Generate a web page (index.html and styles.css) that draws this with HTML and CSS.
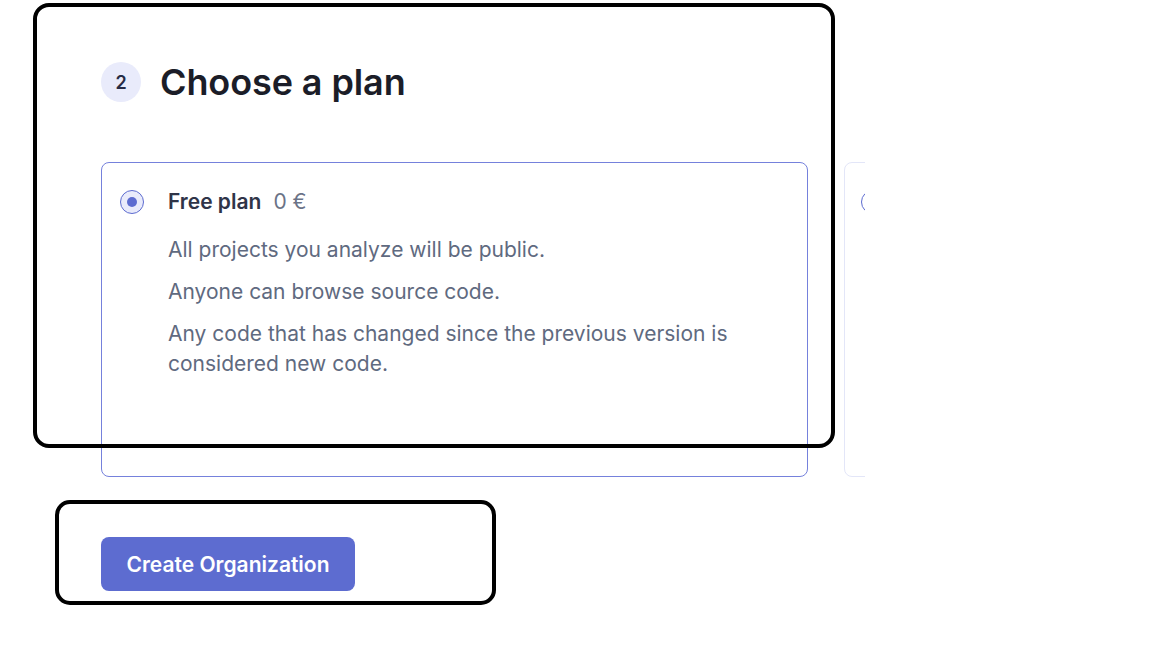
FILE: index.html
```html
<!DOCTYPE html>
<html lang="en">
<head>
<meta charset="utf-8">
<link rel="stylesheet" href="styles.css">
</head>
<body>
<main class="page">
  <div class="step-head">
    <span class="step-num">2</span>
    <h2 class="step-title">Choose a plan</h2>
  </div>
  <div class="plans">
    <div class="plan plan-selected">
      <span class="radio radio-on"><span class="radio-dot"></span></span>
      <div class="plan-body">
        <div class="plan-name"><strong>Free plan</strong><span class="plan-price">0 €</span></div>
        <p class="plan-line">All projects you analyze will be public.</p>
        <p class="plan-line">Anyone can browse source code.</p>
        <p class="plan-line">Any code that has changed since the previous version is considered new code.</p>
      </div>
    </div>
    <div class="plan plan-other">
      <span class="radio"></span>
    </div>
  </div>
  <div class="actions">
    <button class="btn-primary" type="button">Create Organization</button>
  </div>
</main>
<div class="mark mark-plan"></div>
<div class="mark mark-action"></div>
</body>
</html>
```
FILE: styles.css
```css
html, body {
  margin: 0;
  padding: 0;
  background: #ffffff;
  font-family: Inter, "Noto Sans", sans-serif;
}
.page {
  padding: 62px 0 0 101px;
}
.step-head {
  display: flex;
  align-items: center;
  gap: 19px;
  height: 40px;
}
.step-num {
  width: 40px;
  height: 40px;
  border-radius: 50%;
  background: #e9ebfb;
  color: #272b46;
  font-size: 18px;
  font-weight: 600;
  display: flex;
  align-items: center;
  justify-content: center;
}
.step-title {
  margin: 0;
  font-size: 36px;
  font-weight: 600;
  color: #1b1d28;
  letter-spacing: -0.1px;
}
.plans {
  margin-top: 60px;
  width: 764px;
  display: flex;
  gap: 36px;
  overflow: hidden;
}
.plan {
  flex: 0 0 707px;
  box-sizing: border-box;
  height: 315px;
  border: 1px solid #7581dc;
  border-radius: 8px;
  display: flex;
  gap: 24px;
  padding: 27px 18px 0 18px;
}
.plan-other {
  border-color: #e3e6f8;
  padding-left: 16px;
}
.radio {
  flex: 0 0 auto;
  box-sizing: border-box;
  width: 24px;
  height: 24px;
  border-radius: 50%;
  border: 1.5px solid #5d6cd0;
  background: #e9ebfb;
  display: flex;
  align-items: center;
  justify-content: center;
}
.plan-other .radio {
  background: #ffffff;
}
.radio-dot {
  width: 10px;
  height: 10px;
  border-radius: 50%;
  background: #5d6cd0;
}
.plan-body {
  color: #5f6a80;
  font-size: 21px;
}
.plan-name {
  font-size: 21px;
  line-height: 24px;
  color: #2f3448;
  margin-bottom: 21px;
}
.plan-name strong {
  font-weight: 600;
}
.plan-price {
  color: #6b7387;
  margin-left: 12px;
}
.plan-line {
  margin: 0 0 12px 0;
  line-height: 30px;
  max-width: 600px;
}
.actions {
  margin-top: 60px;
}
.btn-primary {
  width: 254px;
  height: 54px;
  border: none;
  border-radius: 8px;
  background: #5d6cd0;
  color: #ffffff;
  font-family: Inter, "Noto Sans", sans-serif;
  font-size: 21px;
  font-weight: 600;
  padding: 0;
}
.mark {
  position: absolute;
  box-sizing: border-box;
  border: 4px solid #000000;
  pointer-events: none;
}
.mark-plan {
  left: 33px;
  top: 3px;
  width: 802px;
  height: 445px;
  border-radius: 16px;
}
.mark-action {
  left: 55px;
  top: 500px;
  width: 441px;
  height: 105px;
  border-radius: 15px;
}
```
